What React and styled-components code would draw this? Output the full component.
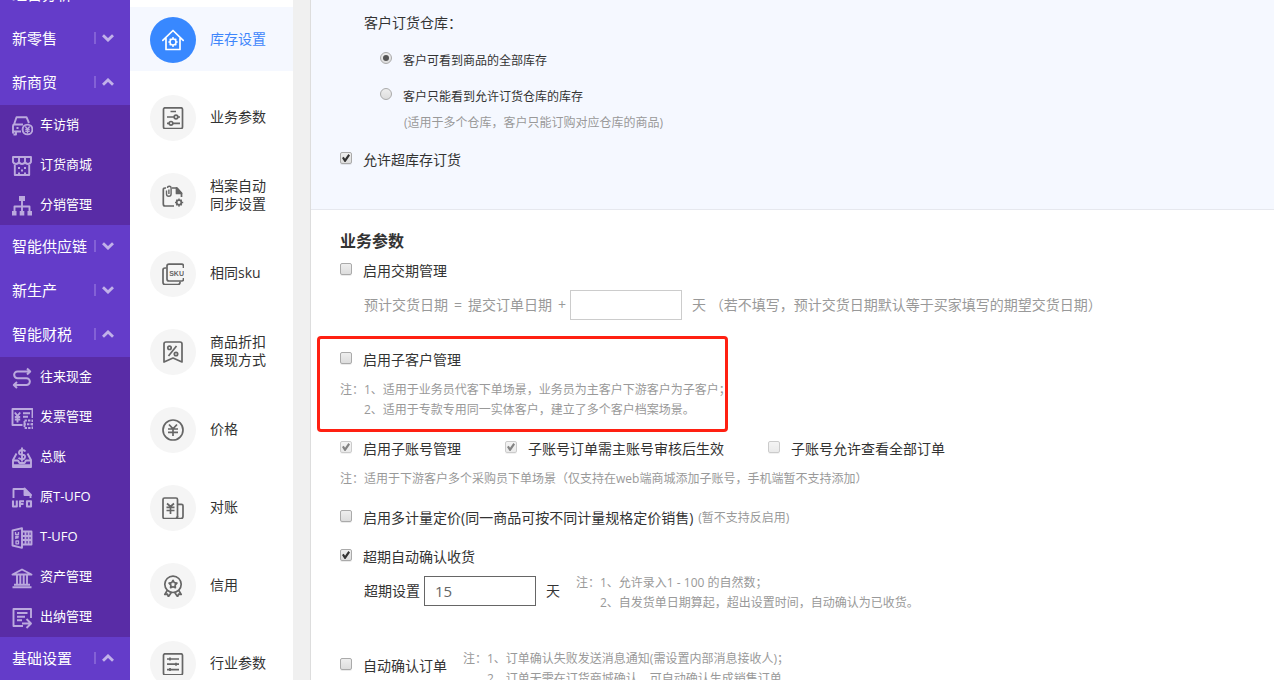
import React, { useState } from 'react'
import styled, { createGlobalStyle, css } from 'styled-components'

const GlobalStyle = createGlobalStyle`
  * {
    box-sizing: border-box;
  }

  body {
    margin: 0;
    background-color: #ffffff;
    color: #333333;
    font-family: 'Open Sans', 'Noto Sans CJK SC', sans-serif;
    font-size: 14px;
    line-height: 20px;
  }

  button,
  input {
    font-family: inherit;
  }
`

/* ---------- layout ---------- */

const Page = styled.div`
  display: flex;
  height: 100vh;
  overflow: hidden;
`

const Sidebar = styled.nav`
  flex: 0 0 130px;
  background-color: #643cc9;
`

// the menu is scrolled down by part of its first row
const SidebarScroll = styled.div`
  margin-top: -27px;
`

const GroupButton = styled.button`
  display: flex;
  align-items: center;
  width: 100%;
  height: 44px;
  padding: 0 16px 2px 12px;
  border: 0;
  background: none;
  color: #ffffff;
  font-size: 15px;
  line-height: 20px;
  text-align: left;
  white-space: nowrap;
  cursor: pointer;
`

const GroupArrow = styled.span`
  display: flex;
  align-items: center;
  margin-left: auto;
  padding-left: 6px;
  height: 12px;
  border-left: 2px solid #8361d6;
`

const SubMenu = styled.div`
  background-color: #592ca6;
`

const SubLink = styled.a`
  display: flex;
  align-items: center;
  gap: 7px;
  height: 40px;
  padding: 0 0 3px 11px;
  color: #ffffff;
  font-size: 13px;
  text-decoration: none;
  white-space: nowrap;

  svg {
    flex: none;
    margin-top: 5px;
    color: #bba9de;
  }
`

const Tabs = styled.nav`
  flex: 0 0 163px;
  display: flex;
  flex-direction: column;
  gap: 14px;
  padding-top: 7px;
`

const TabIcon = styled.span`
  display: flex;
  align-items: center;
  justify-content: center;
  flex: none;
  width: 46px;
  height: 46px;
  margin-top: 2px;
  border-radius: 50%;
  background-color: #f5f5f5;
  color: #666666;
`

const TabLink = styled.a`
  display: flex;
  align-items: center;
  flex: none;
  gap: 14px;
  height: 64px;
  padding-left: 20px;
  color: #333333;
  line-height: 18px;
  text-decoration: none;

  ${({ $active }) =>
    $active &&
    css`
      background-color: #f5f8ff;
      color: #3f86fb;

      ${TabIcon} {
        background-color: #3888ff;
        color: #ffffff;
      }
    `}
`

const TabLabel = styled.span`
  width: 60px;
`

const Gutter = styled.div`
  flex: 0 0 17px;
  background-color: #f0f0f0;
`

const Main = styled.main`
  flex: 1;
  min-width: 0;
  border-left: 1px solid #dddddd;
`

/* ---------- form ---------- */

const Section = styled.section`
  padding: 19px 29px 0;
`

const StockSection = styled.section`
  padding: 13px 29px 39px;
  border-bottom: 1px solid #e6e8ee;
  background-color: #f5f8ff;
`

const Title = styled.h2`
  margin: 0 0 8px;
  font-size: 16px;
  line-height: 24px;
  font-weight: bold;
`

const FieldLabel = styled.div`
  padding-left: 24px;
`

const RadioList = styled.div`
  display: flex;
  flex-direction: column;
  gap: 16px;
  padding: 18px 0 0 40px;
`

const Option = styled.label`
  display: inline-flex;
  align-items: center;
  font-size: ${({ $small }) => ($small ? '12px' : '14px')};
  white-space: nowrap;
`

const controlStyle = css`
  appearance: none;
  flex: none;
  display: grid;
  place-items: center;
  width: 12px;
  height: 12px;
  margin: 0 11px 4px 0;
  border: 1px solid #aaaaaa;
  background-image: linear-gradient(#eeeeee, #dddddd);

  &:disabled {
    opacity: 0.6;
  }
`

const Checkbox = styled.input.attrs({ type: 'checkbox' })`
  ${controlStyle}
  border-radius: 2px;
  box-shadow: 0 1px 0 rgba(0, 0, 0, 0.08);

  &:checked::after {
    content: '';
    width: 8px;
    height: 8px;
    background-color: #333333;
    clip-path: polygon(0 50%, 22% 34%, 38% 58%, 80% 0, 100% 18%, 44% 100%, 32% 100%);
  }
`

const Radio = styled.input.attrs({ type: 'radio' })`
  ${controlStyle}
  margin-bottom: 6px;
  border-radius: 50%;

  &:checked::after {
    content: '';
    width: 6px;
    height: 6px;
    border-radius: 50%;
    background-color: #555555;
  }
`

const CheckRow = styled.div`
  display: flex;
  align-items: center;
  height: 20px;
  margin-top: ${({ $gap }) => $gap || 0}px;
`

const Note = styled.p`
  margin: ${({ $top }) => $top || 0}px 0 0;
  padding-left: ${({ $indent }) => $indent || 0}px;
  color: #999999;
  font-size: 12px;
  line-height: 20px;
  white-space: nowrap;
`

const Hint = styled.span`
  margin-left: 5px;
  color: #999999;
  font-size: 12px;
`

const InputRow = styled.div`
  display: flex;
  align-items: center;
  margin-top: ${({ $gap }) => $gap}px;
  padding-left: 24px;
  color: ${({ $muted }) => ($muted ? '#999999' : '#333333')};
  white-space: nowrap;
`

const Formula = styled.label`
  display: flex;
  gap: 6px;
`

const NumberInput = styled.input.attrs({ type: 'text' })`
  width: 112px;
  height: 30px;
  margin: 0 10px 0 4px;
  padding: 0 10px;
  border: 1px solid ${({ $strong }) => ($strong ? '#666666' : '#cccccc')};
  background-color: #ffffff;
  color: #666666;
  font-size: 15px;
`

const Highlight = styled.div`
  max-width: 411px;
  margin: 16px 0 0 -23px;
  padding: 11px 0 9px 20px;
  border: 3px solid #ff2012;
  border-radius: 4px;
`

const Spread = styled.div`
  display: flex;
  gap: 44px;
  margin-top: 7px;
`

const SideNotes = styled.div`
  margin: 4px 0 0 16px;
`

const ConfirmRow = styled.div`
  display: flex;
  margin-top: 32px;

  ${Option} {
    height: 20px;
    margin-top: 11px;
  }
`

/* ---------- icons ---------- */

const Icon = ({ size = 22, width = 1.7, children }) => (
  <svg
    width={size}
    height={size}
    viewBox="0 0 22 22"
    fill="none"
    stroke="currentColor"
    strokeWidth={width}
    strokeLinejoin="round"
    aria-hidden="true"
  >
    {children}
  </svg>
)

const Chevron = ({ up }) => (
  <svg width="12" height="8" viewBox="0 0 12 8" fill="none" aria-hidden="true">
    <path
      d={up ? 'M1 6.8 6 1.9l5 4.9' : 'M1 1.2 6 6.1l5-4.9'}
      stroke="#c1b1e9"
      strokeWidth="2.8"
    />
  </svg>
)

const icons = {
  car: (
    <>
      <path d="M3 9.5 5.5 2.2h10L18 8M10 16.500H4.500M2 18.500V11q0-1.500 1.500-1.500H12M2 16.500h3v3H2.500M5.500 13h2" />
      <circle cx="16.500" cy="14.500" r="4.900" />
      <path d="m14.300 11.500 2.200 2.500 2.200-2.500M14.300 14.500h4.400M14.300 16.400h4.400M16.500 14v4.500" strokeWidth="1.300" />
    </>
  ),
  shop: (
    <>
      <path d="M2 2h18v5q-1 2-3 2t-3-2q-1 2-3 2t-3-2q-1 2-3 2T2 7zM8 2v5M14 2v5M3.800 9v11h14.400V9" />
      <path d="M8 12v2M14 12v2M11 14.500v2M8 17.500v2.500M14 17.500v2.500" strokeWidth="2" />
    </>
  ),
  tree: (
    <>
      <path d="M11 6v5.500M3.500 16v-4.500h15V16M11 11.500V16" />
      <path d="M8 1h6v5H8zM1 16h4.500v4.500H1zM8.700 16h4.600v4.500H8.700zM16.500 16H21v4.500h-4.500z" fill="currentColor" stroke="none" />
    </>
  ),
  flow: (
    <path d="M19 4.500H6.500a3.300 3.300 0 0 0 0 6.700h9a3.300 3.300 0 0 1 0 6.700H3M16 1.500l3.200 3-3.200 3M6 15l-3.200 3L6 21" strokeWidth="2" />
  ),
  invoice: (
    <>
      <path d="M11.500 18H1.500V2h20v9M3.800 5.500l2.700 3.300 2.700-3.300M3.800 10h5.400M3.800 12.500h5.400M6.500 9v6.500M12 6.300h7M12 9.800h5" />
      <path d="M13.500 13.500h8v7.500h-8zM12.500 17.200h10" strokeDasharray="2.400 1.100" />
    </>
  ),
  ledger: (
    <>
      <path d="M5.500 6.500 2 13v7h18v-7l-3.500-6.500M2 13.500h5l1.500 2.500h5l1.500-2.500h5M2 18.200h18" />
      <path d="M14.500 4.500Q13.500 3 11 3T8 5.300t3 2.400 3 2.400-3 2.200-3.500-1.500M11 .5v14" />
    </>
  ),
  ufoFile: (
    <>
      <path d="M2.500 11V2h11.500M19.500 7.500V11" />
      <path d="M13.500 1.500 20 8h-6.500z" fill="currentColor" />
      <path d="M2 13.500v6h3.800v-6M9 20.300v-6h4M9 17h3.500M16 14.300h4v5.200h-4z" strokeWidth="2.100" />
    </>
  ),
  ufoBook: (
    <>
      <path d="M1.500 3.500 11 1.200v19.600l-9.500-2.300zM11 4.500h9.500v13H11M14.500 4.500v13M17.600 4.500v13M11 9h9.500M11 13h9.500" />
      <path d="M4.500 5v2.500h3V5M7.800 9.500h-3V12M5 10.800h2.500M5 14h2.500v2.800H5z" strokeWidth="1.300" />
    </>
  ),
  bank: (
    <>
      <path d="m1.500 7.500 9.500-5 9.500 5zM1.500 20.300h19M3 17.800h16" />
      <path d="M6 8v9.500M9.300 8v9.500M12.700 8v9.500M16 8v9.500" />
    </>
  ),
  cashier: (
    <path d="M20 11V2H2.500v17H12M6 6h10.500M6 9.700h8M6 13.300h5M11 16.500h8.500M15.500 12l4.500 4.500-4.500 4.500" />
  ),
  stock: (
    <>
      <path d="M.8 11.300 11 1.500l10.200 9.800M4 9.500v11h14v-11" strokeLinecap="round" />
      <circle cx="11" cy="13" r="3" strokeWidth="1.500" />
      <path d="M11 8v2M11 16v2M6.400 13H8M14 13h1.600M7.700 9.800 9 11M13 15l1.300 1.200M14.300 9.800 13 11M9 15l-1.300 1.200" strokeWidth="1.500" />
    </>
  ),
  params: (
    <>
      <rect x="1.500" y=".8" width="19" height="20.700" rx="1.500" />
      <path d="M8.500 4.500H14M5 10h7.500M15.500 10H18M5 16.300h2.500M10.500 16.300H18" />
      <circle cx="14" cy="10" r="1.800" />
      <circle cx="9" cy="16.300" r="1.800" />
    </>
  ),
  archive: (
    <>
      <path d="M4 3H3q-1.700 0-1.700 1.700V19q0 2 1.700 2h9M10 3h5l4.500 5v4" />
      <path d="M14.500 3v5.500h5z" fill="currentColor" />
      <path d="M4.500 5.500V9a2.300 2.300 0 0 0 4.600 0V3a1.800 1.800 0 0 0-3.600 0M6.900 4.500V9" strokeWidth="1.400" />
      <circle cx="17" cy="17.500" r="2.300" />
      <path d="M17 13.500v1.500M17 20v1.800M13 17.500h1.500M19.500 17.500h1.700M14.300 14.800l1 1M18.800 19.200l1 1M19.700 14.800l-1 1M15.200 19.200l-1 1" strokeWidth="1.300" />
    </>
  ),
  sku: (
    <>
      <path d="M21.500 5V3q0-1.800-1.800-1.800H7Q5 1.200 5 3v13q0 2 2 2h12.700q1.800 0 1.800-1.800V15" />
      <path d="M4.500 5H3Q1 5 1 7v12.500q0 2 2 2h13q2 0 2-2V18.500" />
      <text x="7.200" y="13" fontFamily="Liberation Sans" fontWeight="bold" fontSize="7" fill="currentColor" stroke="none">
        SKU
      </text>
    </>
  ),
  discount: (
    <>
      <path d="M2 21V3q0-2 2-2h14q2 0 2 2v18l-9-4z" />
      <circle cx="7.500" cy="6.800" r="1.700" />
      <circle cx="14" cy="13" r="1.700" />
      <path d="m14.500 5-8 10" />
    </>
  ),
  price: (
    <>
      <circle cx="11" cy="11" r="10" />
      <path d="m7 5.500 4 4.300 4-4.300M6 10h10M6 13.300h10M11 10v7" />
    </>
  ),
  account: (
    <>
      <rect x="1" y="1" width="14.500" height="20.500" rx="1.500" />
      <path d="M15.500 7.300h4q1.500 0 1.500 1.500v10.500q0 2.200-2 2.200h-5q1.500-.5 1.500-2.500" />
      <path d="m5 6.500 3.500 3 3.500-3M4.500 10.300h8M4.500 13.500h8M8.500 10v7" />
    </>
  ),
  credit: (
    <>
      <circle cx="11" cy="9.300" r="8.200" />
      <path d="m11 5.300 1.300 2.300 2.600.5-1.800 2 .3 2.600-2.400-1-2.400 1 .3-2.600-1.800-2 2.600-.5z" />
      <path d="m5.500 15-2.700 4.500 2.700-.3.900 2.500L9.300 17.500M16.500 15l2.700 4.500-2.700-.3-.9 2.500-2.900-4.200" />
    </>
  ),
  industry: (
    <>
      <rect x="1.500" y=".8" width="19" height="21" rx="1.500" />
      <path d="M5 6h12M5 11.200h12M5 16.600h12M8 4.500v3M14 9.700v3M8 15v3" />
    </>
  ),
}

/* ---------- data ---------- */

const menu = [
  { name: '经营分析' },
  { name: '新零售' },
  {
    name: '新商贸',
    items: [
      ['car', '车访销'],
      ['shop', '订货商城'],
      ['tree', '分销管理'],
    ],
  },
  { name: '智能供应链' },
  { name: '新生产' },
  {
    name: '智能财税',
    items: [
      ['flow', '往来现金'],
      ['invoice', '发票管理'],
      ['ledger', '总账'],
      ['ufoFile', '原T-UFO'],
      ['ufoBook', 'T-UFO'],
      ['bank', '资产管理'],
      ['cashier', '出纳管理'],
    ],
  },
  { name: '基础设置', items: [] },
]

const tabs = [
  ['stock', '库存设置'],
  ['params', '业务参数'],
  ['archive', '档案自动同步设置'],
  ['sku', '相同sku'],
  ['discount', '商品折扣展现方式'],
  ['price', '价格'],
  ['account', '对账'],
  ['credit', '信用'],
  ['industry', '行业参数'],
]

/* ---------- parts ---------- */

const MenuGroup = ({ name, items }) => (
  <>
    <GroupButton type="button" aria-expanded={!!items}>
      {name}
      <GroupArrow>
        <Chevron up={!!items} />
      </GroupArrow>
    </GroupButton>
    {items && (
      <SubMenu>
        {items.map(([icon, label]) => (
          <SubLink href="#" key={label}>
            <Icon width={1.9}>{icons[icon]}</Icon>
            {label}
          </SubLink>
        ))}
      </SubMenu>
    )}
  </>
)

const Check = ({ label, ...rest }) => (
  <Option>
    <Checkbox {...rest} />
    {label}
  </Option>
)

export default function App() {
  const [active, setActive] = useState('stock')
  const [days, setDays] = useState('15')
  const [leadDays, setLeadDays] = useState('')

  return (
    <>
      <GlobalStyle />
      <Page>
        <Sidebar>
          <SidebarScroll>
            {menu.map((group) => (
              <MenuGroup key={group.name} {...group} />
            ))}
          </SidebarScroll>
        </Sidebar>

        <Tabs>
          {tabs.map(([icon, label]) => (
            <TabLink
              href="#"
              key={icon}
              $active={icon === active}
              onClick={() => setActive(icon)}
            >
              <TabIcon>
                <Icon>{icons[icon]}</Icon>
              </TabIcon>
              <TabLabel>{label}</TabLabel>
            </TabLink>
          ))}
        </Tabs>
        <Gutter />

        <Main>
          <StockSection>
            <FieldLabel>客户订货仓库：</FieldLabel>
            <RadioList>
              <Option $small>
                <Radio name="warehouse" defaultChecked />
                客户可看到商品的全部库存
              </Option>
              <Option $small>
                <Radio name="warehouse" />
                客户只能看到允许订货仓库的库存
              </Option>
            </RadioList>
            <Note $top={6} $indent={64}>
              (适用于多个仓库，客户只能订购对应仓库的商品)
            </Note>
            <CheckRow $gap={17}>
              <Check label="允许超库存订货" defaultChecked />
            </CheckRow>
          </StockSection>

          <Section>
            <Title>业务参数</Title>
            <CheckRow>
              <Check label="启用交期管理" />
            </CheckRow>
            <InputRow $gap={9} $muted>
              <Formula htmlFor="leadDays">
                <span>预计交货日期</span>
                <span>=</span>
                <span>提交订单日期</span>
                <span>+</span>
              </Formula>
              <NumberInput
                id="leadDays"
                value={leadDays}
                onChange={(e) => setLeadDays(e.target.value)}
              />
              天 （若不填写，预计交货日期默认等于买家填写的期望交货日期）
            </InputRow>

            <Highlight>
              <CheckRow>
                <Check label="启用子客户管理" />
              </CheckRow>
              <Note $top={10}>
                注：1、适用于业务员代客下单场景，业务员为主客户下游客户为子客户；
              </Note>
              <Note $indent={24}>
                2、适用于专款专用同一实体客户，建立了多个客户档案场景。
              </Note>
            </Highlight>

            <Spread>
              <Check label="启用子账号管理" defaultChecked disabled />
              <Check label="子账号订单需主账号审核后生效" defaultChecked disabled />
              <Check label="子账号允许查看全部订单" disabled />
            </Spread>
            <Note $top={10}>
              注：适用于下游客户多个采购员下单场景（仅支持在web端商城添加子账号，手机端暂不支持添加）
            </Note>

            <CheckRow $gap={19}>
              <Check label="启用多计量定价(同一商品可按不同计量规格定价销售)" />
              <Hint>(暂不支持反启用)</Hint>
            </CheckRow>

            <CheckRow $gap={19}>
              <Check label="超期自动确认收货" defaultChecked />
            </CheckRow>
            <InputRow $gap={2}>
              <label htmlFor="days">超期设置</label>
              <NumberInput
                id="days"
                $strong
                value={days}
                onChange={(e) => setDays(e.target.value)}
              />
              天
              <SideNotes>
                <Note>注：1、允许录入1 - 100 的自然数；</Note>
                <Note $indent={24}>2、自发货单日期算起，超出设置时间，自动确认为已收货。</Note>
              </SideNotes>
            </InputRow>

            <ConfirmRow>
              <Check label="自动确认订单" />
              <SideNotes>
                <Note>注：1、订单确认失败发送消息通知(需设置内部消息接收人)；</Note>
                <Note $indent={24}>2、订单无需在订货商城确认，可自动确认生成销售订单。</Note>
              </SideNotes>
            </ConfirmRow>
          </Section>
        </Main>
      </Page>
    </>
  )
}
